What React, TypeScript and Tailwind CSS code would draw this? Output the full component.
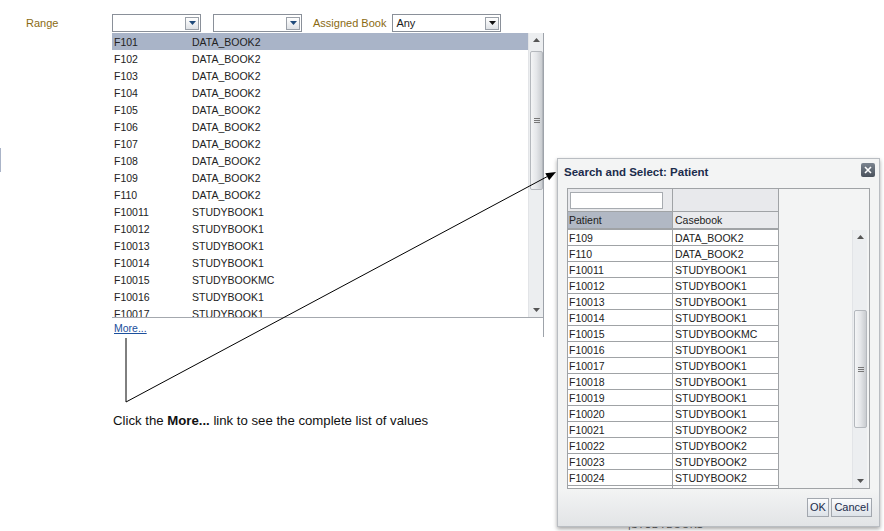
import React from 'react';

const listRows: [string, string][] = [
  ['F101', 'DATA_BOOK2'],
  ['F102', 'DATA_BOOK2'],
  ['F103', 'DATA_BOOK2'],
  ['F104', 'DATA_BOOK2'],
  ['F105', 'DATA_BOOK2'],
  ['F106', 'DATA_BOOK2'],
  ['F107', 'DATA_BOOK2'],
  ['F108', 'DATA_BOOK2'],
  ['F109', 'DATA_BOOK2'],
  ['F110', 'DATA_BOOK2'],
  ['F10011', 'STUDYBOOK1'],
  ['F10012', 'STUDYBOOK1'],
  ['F10013', 'STUDYBOOK1'],
  ['F10014', 'STUDYBOOK1'],
  ['F10015', 'STUDYBOOKMC'],
  ['F10016', 'STUDYBOOK1'],
  ['F10017', 'STUDYBOOK1'],
];

const dialogRows: [string, string][] = [
  ['F109', 'DATA_BOOK2'],
  ['F110', 'DATA_BOOK2'],
  ['F10011', 'STUDYBOOK1'],
  ['F10012', 'STUDYBOOK1'],
  ['F10013', 'STUDYBOOK1'],
  ['F10014', 'STUDYBOOK1'],
  ['F10015', 'STUDYBOOKMC'],
  ['F10016', 'STUDYBOOK1'],
  ['F10017', 'STUDYBOOK1'],
  ['F10018', 'STUDYBOOK1'],
  ['F10019', 'STUDYBOOK1'],
  ['F10020', 'STUDYBOOK1'],
  ['F10021', 'STUDYBOOK2'],
  ['F10022', 'STUDYBOOK2'],
  ['F10023', 'STUDYBOOK2'],
  ['F10024', 'STUDYBOOK2'],
  ['', ''],
];

function SelectBox({ width, value, dark }: { width: string; value?: string; dark?: boolean }) {
  return (
    <div className={`${width} h-[18px] border border-[#8a9099] bg-white flex items-center justify-between pl-[3px] pr-[1px]`}>
      <span className="text-[11px] text-[#1a1a1a] leading-none">{value}</span>
      <div className="w-[14px] h-[13px] border border-[#9aa0a8] bg-gradient-to-b from-[#ffffff] to-[#dfe2e6] flex items-center justify-center">
        <svg width="7" height="4" viewBox="0 0 7 4">
          <path d="M0 0 H7 L3.5 4 Z" fill={dark ? '#111111' : '#1f4a7a'} />
        </svg>
      </div>
    </div>
  );
}

function ScrollBar({ thumbTop, thumbHeight }: { thumbTop: string; thumbHeight: string }) {
  return (
    <div className="relative w-[15px] h-full bg-[#eceef0] border-l border-[#e2e4e7]">
      <svg className="absolute left-[4px] top-[5px]" width="7" height="4" viewBox="0 0 7 4">
        <path d="M0 4 L3.5 0 L7 4 Z" fill="#555" />
      </svg>
      <div className={`absolute left-[1px] ${thumbTop} ${thumbHeight} w-[13px] rounded-[2px] border border-[#b4b8bd] bg-gradient-to-r from-[#f4f5f6] via-[#e4e6e9] to-[#c9ccd0] flex items-center justify-center`}>
        <div className="flex flex-col gap-[1px]">
          <div className="w-[6px] h-px bg-[#777]" />
          <div className="w-[6px] h-px bg-[#777]" />
          <div className="w-[6px] h-px bg-[#777]" />
        </div>
      </div>
      <svg className="absolute left-[4px] bottom-[5px]" width="7" height="4" viewBox="0 0 7 4">
        <path d="M0 0 H7 L3.5 4 Z" fill="#555" />
      </svg>
    </div>
  );
}

export default function App() {
  return (
    <div className="relative w-[884px] h-[531px] bg-white overflow-hidden font-['Liberation_Sans',Arial,sans-serif] text-[#222]">
      {/* filter row */}
      <div className="flex items-center pt-[14px] pl-[26px]">
        <span className="w-[86px] text-[11px] text-[#8a6a12] pt-[1px]">Range</span>
        <SelectBox width="w-[89px]" />
        <div className="ml-[12px]">
          <SelectBox width="w-[89px]" />
        </div>
        <span className="ml-[11px] text-[11px] text-[#8a6a12] pt-[1px]">Assigned Book</span>
        <div className="ml-[6px]">
          <SelectBox width="w-[109px]" value="Any" dark />
        </div>
      </div>

      {/* left edge marker */}
      <div className="absolute left-0 top-[148px] w-px h-[24px] bg-[#aab4c8]" />

      {/* dropdown list */}
      <div className="absolute left-[112px] top-[33px] w-[432px] border-r border-[#9ea3aa] bg-white">
        <div className="flex h-[285px] border-b border-[#a4a8ae]">
          <div className="flex-1 overflow-hidden">
            {listRows.map(([a, b], i) => (
              <div
                key={a}
                className={`flex h-[17px] items-center pt-[1px] text-[10.5px] leading-none ${i === 0 ? 'bg-[#a9b4c8]' : ''}`}
              >
                <span className="w-[80px] pl-[2px]">{a}</span>
                <span>{b}</span>
              </div>
            ))}
          </div>
          <ScrollBar thumbTop="top-[18px]" thumbHeight="h-[139px]" />
        </div>
        <div className="h-[19px] pl-[2px] leading-[18px]">
          <span className="text-[10.5px] text-[#1b4f9c] underline">More...</span>
        </div>
      </div>

      {/* callout text */}
      <div className="absolute left-[113px] top-[411px] text-[13.2px] text-[#111]">
        Click the <b>More...</b> link to see the complete list of values
      </div>

      {/* text behind dialog */}
      <div className="absolute left-[628px] top-[517px] text-[10.5px] text-[#666]">|STUDYBOOK1</div>

      {/* dialog */}
      <div className="absolute left-[557px] top-[158px] w-[323px] h-[369px] border border-[#b9bdc2] bg-[#f3f4f4] shadow-[0_2px_4px_rgba(0,0,0,0.35)] flex flex-col">
        <div className="h-[29px] flex items-start justify-between pl-[6px] pr-[4px]">
          <span className="mt-[5px] text-[11.5px] font-bold text-[#1c2c4c]">Search and Select: Patient</span>
          <div className="mt-[4px] w-[14px] h-[14px] rounded-[2px] bg-gradient-to-b from-[#7c8590] to-[#4a525c] flex items-center justify-center">
            <svg width="8" height="8" viewBox="0 0 8 8">
              <path d="M1 1 L7 7 M7 1 L1 7" stroke="#ffffff" strokeWidth="1.6" />
            </svg>
          </div>
        </div>
        <div className="ml-[9px] w-[303px] h-[301px] border border-[#a0a3a6] bg-[#f3f4f4] flex">
          <div className="w-[211px] border-r border-[#a0a3a6] overflow-hidden">
            <div className="flex h-[23px] border-b border-[#a0a3a6] bg-[#e8e9ec]">
              <div className="w-[105px] border-r border-[#a0a3a6] flex items-center pl-[2px]">
                <div className="w-[93px] h-[17px] border border-[#a7abb0] bg-white" />
              </div>
              <div className="flex-1" />
            </div>
            <div className="flex h-[18px] border-b-2 border-[#a0a3a6] text-[10.5px]">
              <div className="w-[105px] border-r border-[#a0a3a6] bg-[#b1b8c4] flex items-center pl-[1px] pt-[1px]">Patient</div>
              <div className="flex-1 bg-[#e9eaed] flex items-center pl-[2px] pt-[1px]">Casebook</div>
            </div>
            {dialogRows.map(([a, b], i) => (
              <div key={i} className="flex h-[16px] border-b border-[#a0a3a6] bg-white text-[10.5px] leading-none">
                <div className="w-[105px] border-r border-[#a0a3a6] flex items-center pl-[1px] pt-[1px]">{a}</div>
                <div className="flex-1 flex items-center pl-[2px] pt-[1px]">{b}</div>
              </div>
            ))}
          </div>
          <div className="flex-1 flex justify-end pr-[2px] pt-[41px]">
            <div className="h-[258px]">
              <ScrollBar thumbTop="top-[80px]" thumbHeight="h-[118px]" />
            </div>
          </div>
        </div>
        <div className="flex-1 flex items-center justify-end gap-[2px] pr-[7px] bg-gradient-to-b from-[#f3f4f4] to-[#e2e4e6]">
          <button className="h-[19px] w-[22px] border border-[#a2a7ae] bg-gradient-to-b from-[#fbfcfd] to-[#dde2e8] text-[11px] text-[#1c2c4c]">OK</button>
          <button className="h-[19px] w-[41px] border border-[#a2a7ae] bg-gradient-to-b from-[#fbfcfd] to-[#dde2e8] text-[11px] text-[#1c2c4c]">Cancel</button>
        </div>
      </div>

      {/* callout lines */}
      <svg className="absolute inset-0 pointer-events-none" width="884" height="531">
        <path d="M126 338 V402 L547 176.7" fill="none" stroke="#000" strokeWidth="1" />
        <polygon points="556,172 549.1,180.2 545.3,173.2" fill="#000" />
      </svg>
    </div>
  );
}
